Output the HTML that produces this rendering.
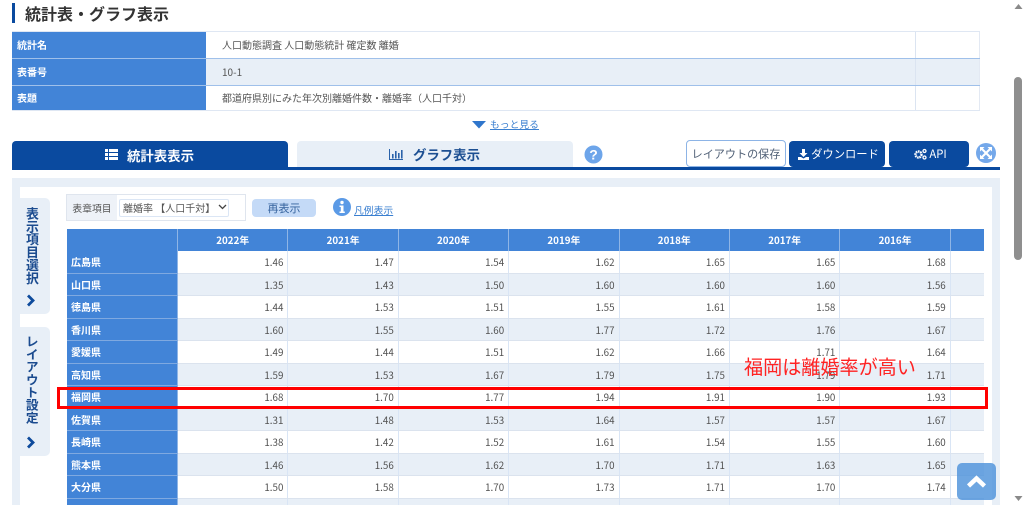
<!DOCTYPE html>
<html lang="ja"><head><meta charset="utf-8"><title>統計表・グラフ表示</title>
<style>
*{box-sizing:border-box}
html,body{margin:0;padding:0;width:1024px;height:505px;overflow:hidden;background:#fff;font-family:"Liberation Sans","Noto Sans CJK JP",sans-serif;color:#555}
#w{position:absolute;left:0;top:0;width:1024px;height:505px;overflow:hidden;background:#fff;filter:blur(.3px)}
.a{position:absolute}
.f{font-family:"Noto Sans CJK JP",sans-serif}
.c{display:flex;align-items:center;justify-content:center;white-space:nowrap}
.inf{left:12px;width:968px;display:flex;font-family:"Noto Sans CJK JP",sans-serif;font-size:10px;line-height:1}
.inf b{display:flex;align-items:center;width:193.500px;background:#4284d7;color:#fff;padding-left:5px;height:100%;font-size:10px}
.inf i{font-style:normal;display:flex;align-items:center;width:710px;padding-left:16.500px;height:100%;border-right:1px solid #dbe4f1;white-space:nowrap}
.inf u{width:64.500px;height:100%;border-right:1px solid #e3e9f3}
.g{background:#e8eff7}
#tb{left:67px;top:229px;width:917px;font-family:"Noto Sans CJK JP",sans-serif;font-size:9.8px}
.r{display:flex;height:22.5px;border-bottom:1px solid #dbe3ee;line-height:23px}
.r.e{background:#e8eff7}
.r span{display:block;width:110.4px;text-align:right;padding-right:4px;border-right:1px solid #d9e5f5;color:#505050}
.r b{display:block;width:111px;background:#4284d7;color:#fff;padding-left:4px;font-size:10px;line-height:21.500px;border-right:1px solid #8fb5e6;border-bottom:1px solid #7fa9e0;height:22.5px}
.h{display:flex;height:22px;background:#4284d7;color:#fff;font-weight:700;line-height:23px;font-size:9.8px;text-align:center}
.h span{display:block;width:110.4px;border-right:1px solid #8fb5e6}
.h span:first-child{width:111px}
.btn{background:#0a4a9f;color:#fff;border-radius:4px;font-size:11.3px;font-family:"Noto Sans CJK JP",sans-serif}
.v{writing-mode:vertical-rl;font-family:"Noto Sans CJK JP",sans-serif;font-weight:700;font-size:13px;color:#1b4b8f;line-height:1;white-space:nowrap}
.sd{background:#e8eff7;border-radius:0 5px 5px 0;left:20px;width:30px}
</style></head><body><div id="w">

<div class="a" style="left:12px;top:3px;width:3px;height:20px;background:#0a4a9f"></div>
<div class="a f" style="left:25px;top:1px;font-size:16px;font-weight:700;color:#333;line-height:24px;white-space:nowrap">統計表・グラフ表示</div>

<div class="a" style="left:12px;top:31px;width:968px;height:1px;background:#dfe7f3"></div>
<div class="a inf" style="top:32px;height:26px"><b>統計名</b><i>人口動態調査 人口動態統計 確定数 離婚</i><u></u></div>
<div class="a inf g" style="top:58px;height:27px;border-top:1px solid #9fc0ea"><b>表番号</b><i>10-1</i><u></u></div>
<div class="a inf" style="top:85px;height:25px;border-top:1px solid #9fc0ea"><b>表題</b><i>都道府県別にみた年次別離婚件数・離婚率（人口千対）</i><u></u></div>
<div class="a" style="left:12px;top:110px;width:968px;height:1px;background:#dfe7f3"></div>

<svg class="a" style="left:472px;top:121px" width="15" height="8" viewBox="0 0 15 8"><path d="M0 0H14L7 7.5Z" fill="#2f76cc"/></svg>
<a class="a f" style="left:490px;top:117px;font-size:9.8px;line-height:15px;color:#3a7fd0;text-decoration:underline;white-space:nowrap">もっと見る</a>

<div class="a c f" style="left:12px;top:141px;width:276px;height:27px;background:#0a4a9f;border-radius:4px 4px 0 0;color:#fff;font-weight:700;font-size:13.4px;padding-right:1px">
<svg width="13" height="11" viewBox="0 0 13 11" style="margin-right:9px"><path d="M0 0h3v3H0zM4 0h9v3H4zM0 4h3v3H0zM4 4h9v3H4zM0 8h3v3H0zM4 8h9v3H4z" fill="#fff"/></svg>統計表表示</div>
<div class="a c f" style="left:297px;top:141px;width:276px;height:26px;background:#e8eff7;border-radius:4px 4px 0 0;color:#1c4f92;font-weight:700;font-size:13.4px;padding-right:1px">
<svg width="14" height="11" viewBox="0 0 14 11" style="margin-right:10px"><path d="M.5 0v10.500H14" stroke="#2a62aa" fill="none"/><path d="M3 5h1.600v4.500H3zM6 2h1.600v7.500H6zM9 4h1.600v5.500H9zM12 1h1.600v8.500H12z" fill="#2a62aa"/></svg>グラフ表示</div>
<div class="a" style="left:12px;top:167px;width:988px;height:3px;background:#0a4a9f"></div>

<svg class="a" style="left:584px;top:145px" width="19" height="19" viewBox="0 0 19 19"><circle cx="9.500" cy="9.500" r="9" fill="#6da5ea"/><text x="9.500" y="14.500" text-anchor="middle" font-family="Liberation Sans" font-weight="700" font-size="14" fill="#fff">?</text></svg>

<div class="a c f" style="left:686px;top:140px;width:100px;height:27px;border:1px solid #8db4e6;border-radius:4px;font-size:11.1px;color:#4f5f75;background:#fff">レイアウトの保存</div>
<div class="a c btn" style="left:789px;top:141px;width:96px;height:26px;padding-left:3px"><svg width="11" height="11" viewBox="0 0 11 11" style="margin-right:2px"><path d="M4 0h3v4h2.500L5.500 8 1.500 4H4zM0 8h3l2.500 1.500L8 8h3v3H0z" fill="#fff"/></svg>ダウンロード</div>
<div class="a c btn" style="left:889px;top:141px;width:80px;height:26px;padding-left:3px"><svg width="13" height="12" viewBox="0 0 13 12" style="margin-right:2px"><circle cx="4.500" cy="6.500" r="3" fill="none" stroke="#fff" stroke-width="2.400" stroke-dasharray="1.600 .6"/><circle cx="10.500" cy="3" r="1.500" fill="none" stroke="#fff" stroke-width="1.300"/><circle cx="10.500" cy="9.500" r="1.500" fill="none" stroke="#fff" stroke-width="1.300"/></svg>API</div>
<svg class="a" style="left:976px;top:143px" width="20" height="20" viewBox="0 0 20 20"><circle cx="10" cy="10" r="10" fill="#74a8ea"/><path d="M4 4h4.500L7 5.500l7.500 7.500L16 11.500V16h-4.500L13 14.500 5.500 7 4 8.500zM16 4v4.500L14.500 7 7 14.500 8.500 16H4v-4.500L5.500 13 13 5.500 11.500 4z" fill="#fff"/></svg>

<div class="a" style="left:12px;top:178px;width:988px;height:327px;background:#e8eff7"></div>
<div class="a" style="left:20px;top:187px;width:972px;height:318px;background:#fff"></div>

<div class="a sd" style="top:198px;height:116px"></div>
<div class="a v" style="left:25px;top:207px;font-size:12.900px">表示項目選択</div>
<svg class="a" style="left:26px;top:294px" width="10" height="13" viewBox="0 0 10 13"><path d="M2 1.500 7 6.500 2 11.500" fill="none" stroke="#0d4a9c" stroke-width="2.800"/></svg>
<div class="a sd" style="top:327px;height:129px"></div>
<div class="a v" style="left:25px;top:335px;font-size:12.700px">レイアウト設定</div>
<svg class="a" style="left:26px;top:436px" width="10" height="13" viewBox="0 0 10 13"><path d="M2 1.500 7 6.500 2 11.500" fill="none" stroke="#0d4a9c" stroke-width="2.800"/></svg>

<div class="a" style="left:66px;top:194px;width:180px;height:27px;border:1px solid #dfe5ee;background:#fff"></div>
<div class="a c f" style="left:67px;top:195px;width:50px;height:25px;background:#eef2f8;font-size:9.8px;color:#555">表章項目</div>
<div class="a f" style="left:119px;top:199px;width:110px;height:18px;border:1px solid #dbe6f5;border-radius:2px;font-size:10px;line-height:16px;padding-left:3px;color:#555;white-space:nowrap">離婚率 【人口千対】</div>
<svg class="a" style="left:218px;top:204px" width="9" height="6" viewBox="0 0 9 6"><path d="M1 1l3.500 3.500L8 1" fill="none" stroke="#444" stroke-width="1.300"/></svg>
<div class="a c f" style="left:252px;top:199px;width:64px;height:18px;background:#c4daf7;border-radius:4px;font-size:11px;color:#35639e">再表示</div>
<svg class="a" style="left:333px;top:198px" width="18" height="18" viewBox="0 0 18 18"><circle cx="9" cy="9" r="9" fill="#5b9ae6"/><circle cx="9" cy="4.500" r="1.700" fill="#fff"/><path d="M6.500 7.500h4v6h1.300v1.500H6.500v-1.500h1.300V9H6.500z" fill="#fff"/></svg>
<a class="a f" style="left:354px;top:203px;font-size:9.8px;line-height:15px;color:#3a7fd0;text-decoration:underline;white-space:nowrap">凡例表示</a>

<div class="a" id="tb">
<div class="h"><span></span><span>2022年</span><span>2021年</span><span>2020年</span><span>2019年</span><span>2018年</span><span>2017年</span><span>2016年</span></div>
<div class="r"><b>広島県</b><span>1.46</span><span>1.47</span><span>1.54</span><span>1.62</span><span>1.65</span><span>1.65</span><span>1.68</span></div>
<div class="r e"><b>山口県</b><span>1.35</span><span>1.43</span><span>1.50</span><span>1.60</span><span>1.60</span><span>1.60</span><span>1.56</span></div>
<div class="r"><b>徳島県</b><span>1.44</span><span>1.53</span><span>1.51</span><span>1.55</span><span>1.61</span><span>1.58</span><span>1.59</span></div>
<div class="r e"><b>香川県</b><span>1.60</span><span>1.55</span><span>1.60</span><span>1.77</span><span>1.72</span><span>1.76</span><span>1.67</span></div>
<div class="r"><b>愛媛県</b><span>1.49</span><span>1.44</span><span>1.51</span><span>1.62</span><span>1.66</span><span>1.71</span><span>1.64</span></div>
<div class="r e"><b>高知県</b><span>1.59</span><span>1.53</span><span>1.67</span><span>1.79</span><span>1.75</span><span>1.79</span><span>1.71</span></div>
<div class="r"><b>福岡県</b><span>1.68</span><span>1.70</span><span>1.77</span><span>1.94</span><span>1.91</span><span>1.90</span><span>1.93</span></div>
<div class="r e"><b>佐賀県</b><span>1.31</span><span>1.48</span><span>1.53</span><span>1.64</span><span>1.57</span><span>1.57</span><span>1.67</span></div>
<div class="r"><b>長崎県</b><span>1.38</span><span>1.42</span><span>1.52</span><span>1.61</span><span>1.54</span><span>1.55</span><span>1.60</span></div>
<div class="r e"><b>熊本県</b><span>1.46</span><span>1.56</span><span>1.62</span><span>1.70</span><span>1.71</span><span>1.63</span><span>1.65</span></div>
<div class="r"><b>大分県</b><span>1.50</span><span>1.58</span><span>1.70</span><span>1.73</span><span>1.71</span><span>1.70</span><span>1.74</span></div>
<div class="r e"><b></b><span></span><span></span><span></span><span></span><span></span><span></span><span></span></div>
</div>

<div class="a" style="left:57px;top:387px;width:931px;height:22px;border:3px solid #f00"></div>
<div class="a f" style="left:744px;top:353px;font-size:19.100px;line-height:26px;color:#f22;white-space:nowrap">福岡は離婚率が高い</div>

<div class="a" style="left:957px;top:463px;width:39px;height:37px;background:rgba(74,144,217,.8);border-radius:5px"></div>
<svg class="a" style="left:966px;top:474px" width="21" height="15" viewBox="0 0 21 15"><path d="M2.500 12 10.500 4.500 18.500 12" fill="none" stroke="#fff" stroke-width="4.500"/></svg>

<div class="a" style="left:1013px;top:0;width:11px;height:505px;background:#fff"></div>
<svg class="a" style="left:1014px;top:3px" width="9" height="7" viewBox="0 0 9 7"><path d="M4.500 1 8.500 6H.5z" fill="#8a8a8a"/></svg>
<div class="a" style="left:1014px;top:77px;width:8px;height:183px;background:#8f8f8f;border-radius:4px"></div>
<svg class="a" style="left:1014px;top:495px" width="9" height="7" viewBox="0 0 9 7"><path d="M.5 1h8l-4 5z" fill="#8a8a8a"/></svg>

</div></body></html>
